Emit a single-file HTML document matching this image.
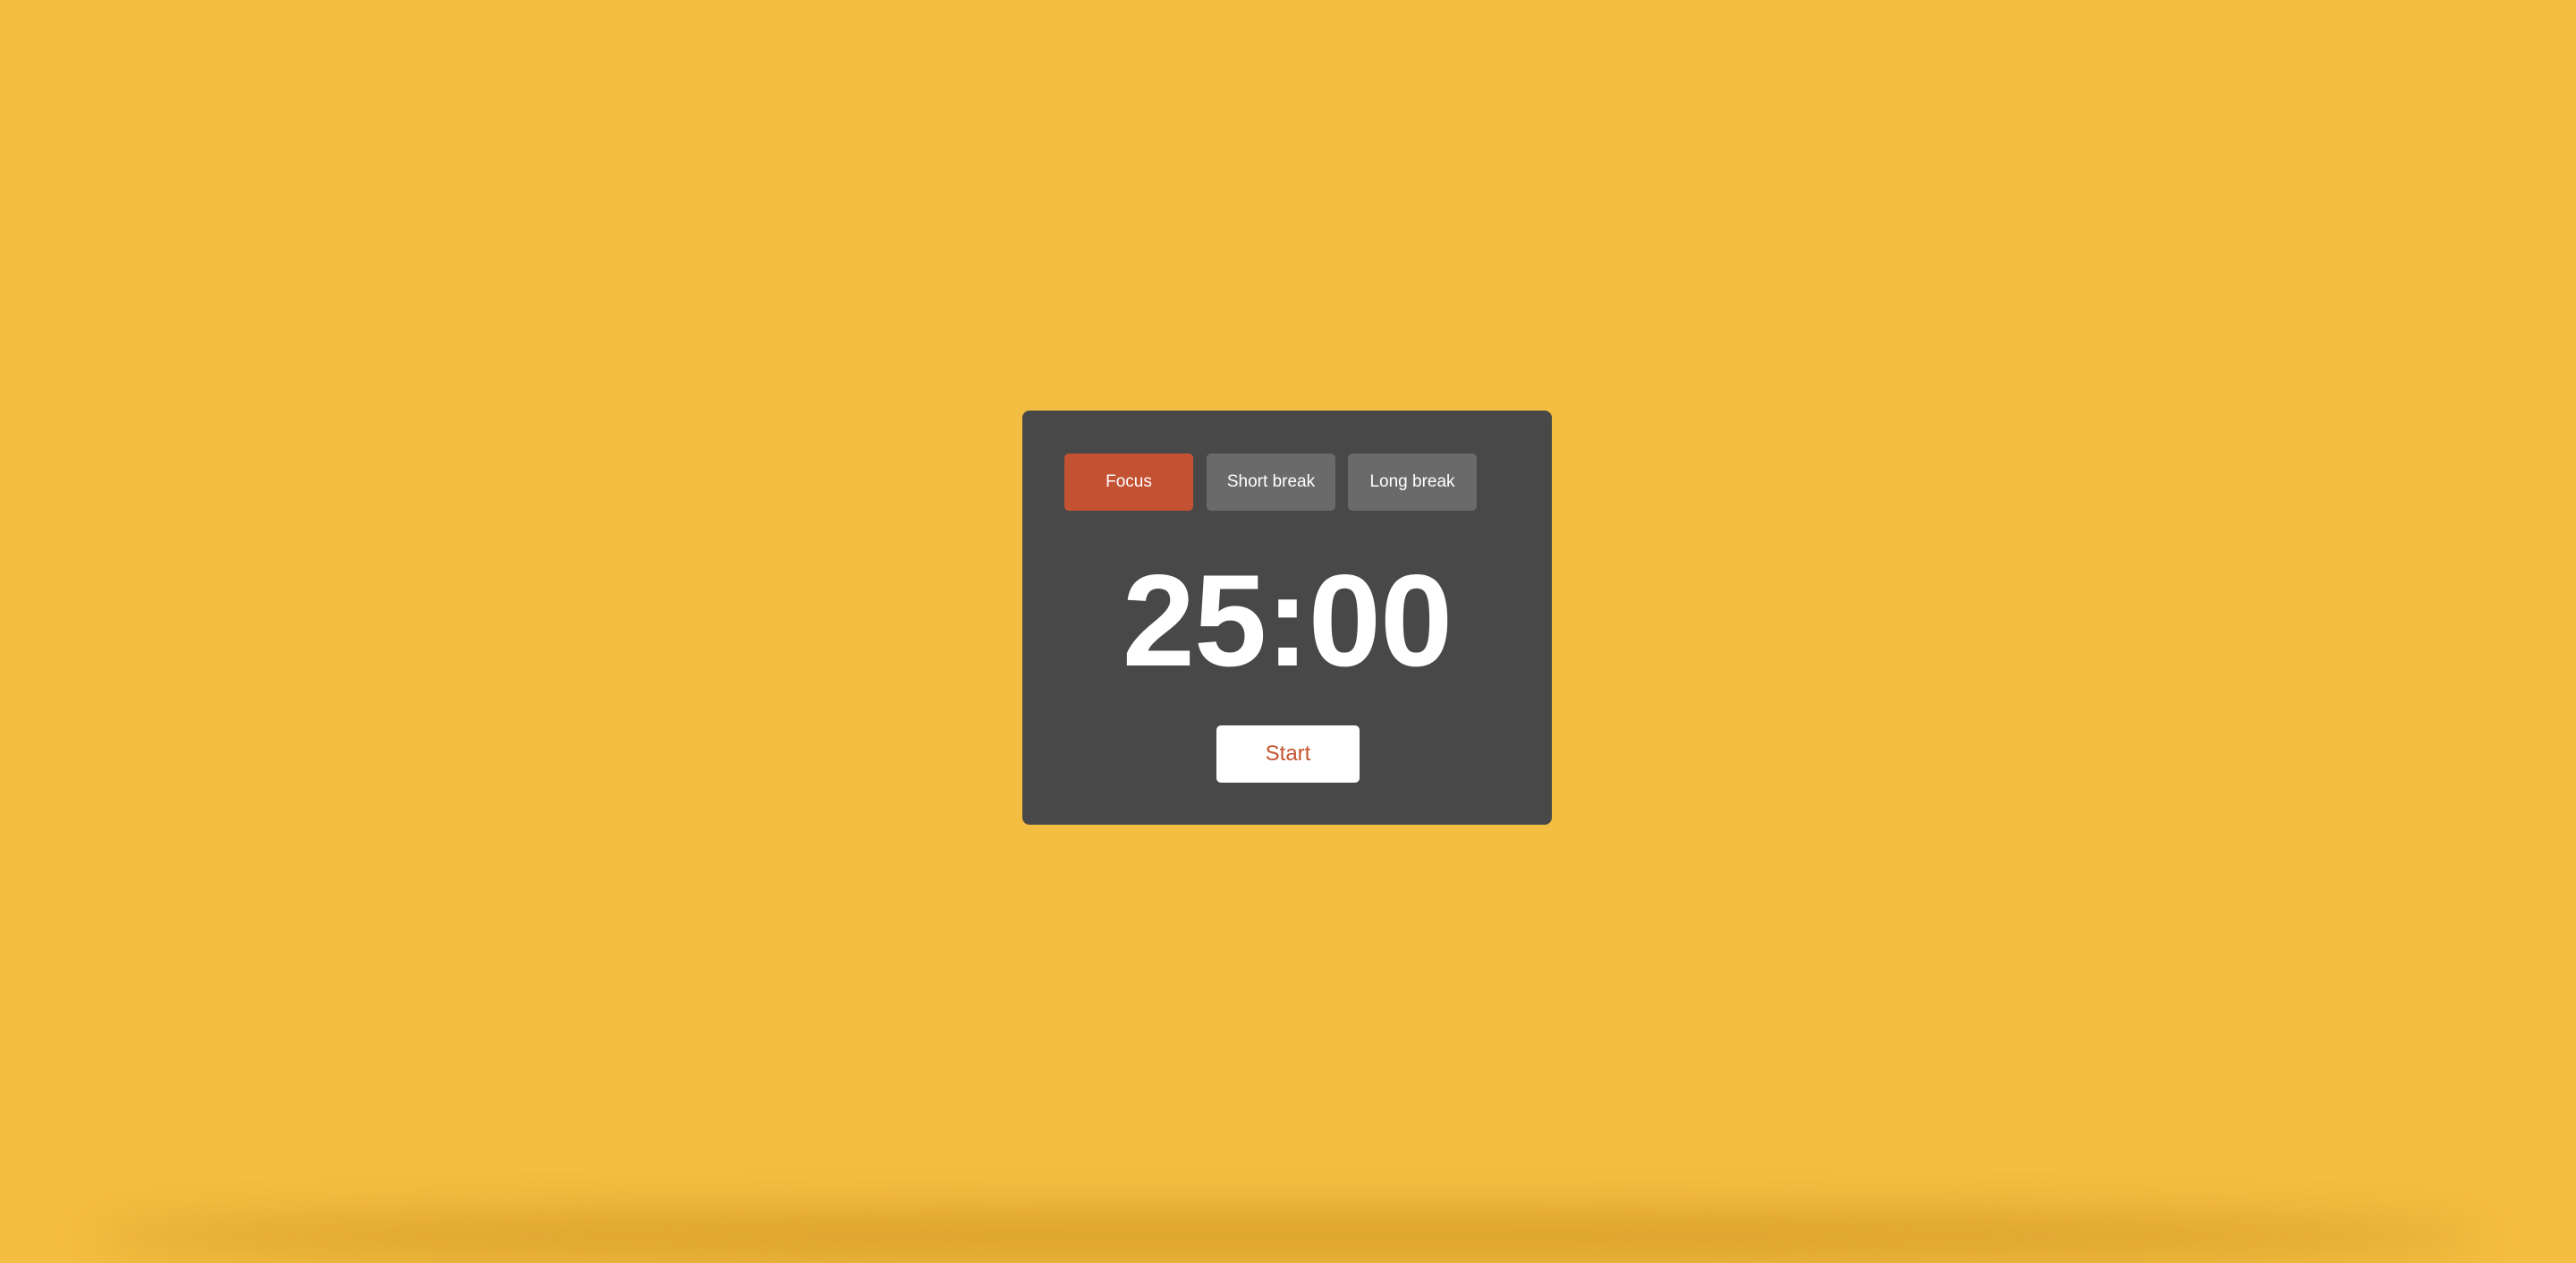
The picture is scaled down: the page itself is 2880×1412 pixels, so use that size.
<!DOCTYPE html>
<html><head><style>
html,body{margin:0;padding:0;width:2880px;height:1382px;overflow:hidden;background:#f4be42;font-family:"Liberation Sans",sans-serif;}
.sh{position:absolute;left:100px;right:100px;bottom:-30px;height:60px;background:rgba(170,110,0,0.35);filter:blur(25px);border-radius:50%/60%;}
.card{position:absolute;left:1143px;top:459px;width:592px;height:463px;background:#484848;border-radius:8px;}
.b{position:absolute;top:48px;height:64px;width:144px;border-radius:5px;background:#6a6a6a;color:#fff;font-size:19px;line-height:64px;text-align:center;}
.t{position:absolute;left:0;width:100%;top:162px;text-align:center;color:#fff;font-weight:bold;font-size:146px;line-height:146px;letter-spacing:-1px;}
.s{position:absolute;left:217px;top:352px;width:160px;height:64px;background:#fff;border-radius:5px;color:#c4532f;font-size:24px;line-height:64px;text-align:center;}
</style></head><body>
<div class="sh"></div>
<div class="card">
<div class="b" style="left:47px;background:#c35233">Focus</div>
<div class="b" style="left:206px">Short break</div>
<div class="b" style="left:364px">Long break</div>
<div class="t">25:00</div>
<div class="s">Start</div>
</div>
</body></html>
